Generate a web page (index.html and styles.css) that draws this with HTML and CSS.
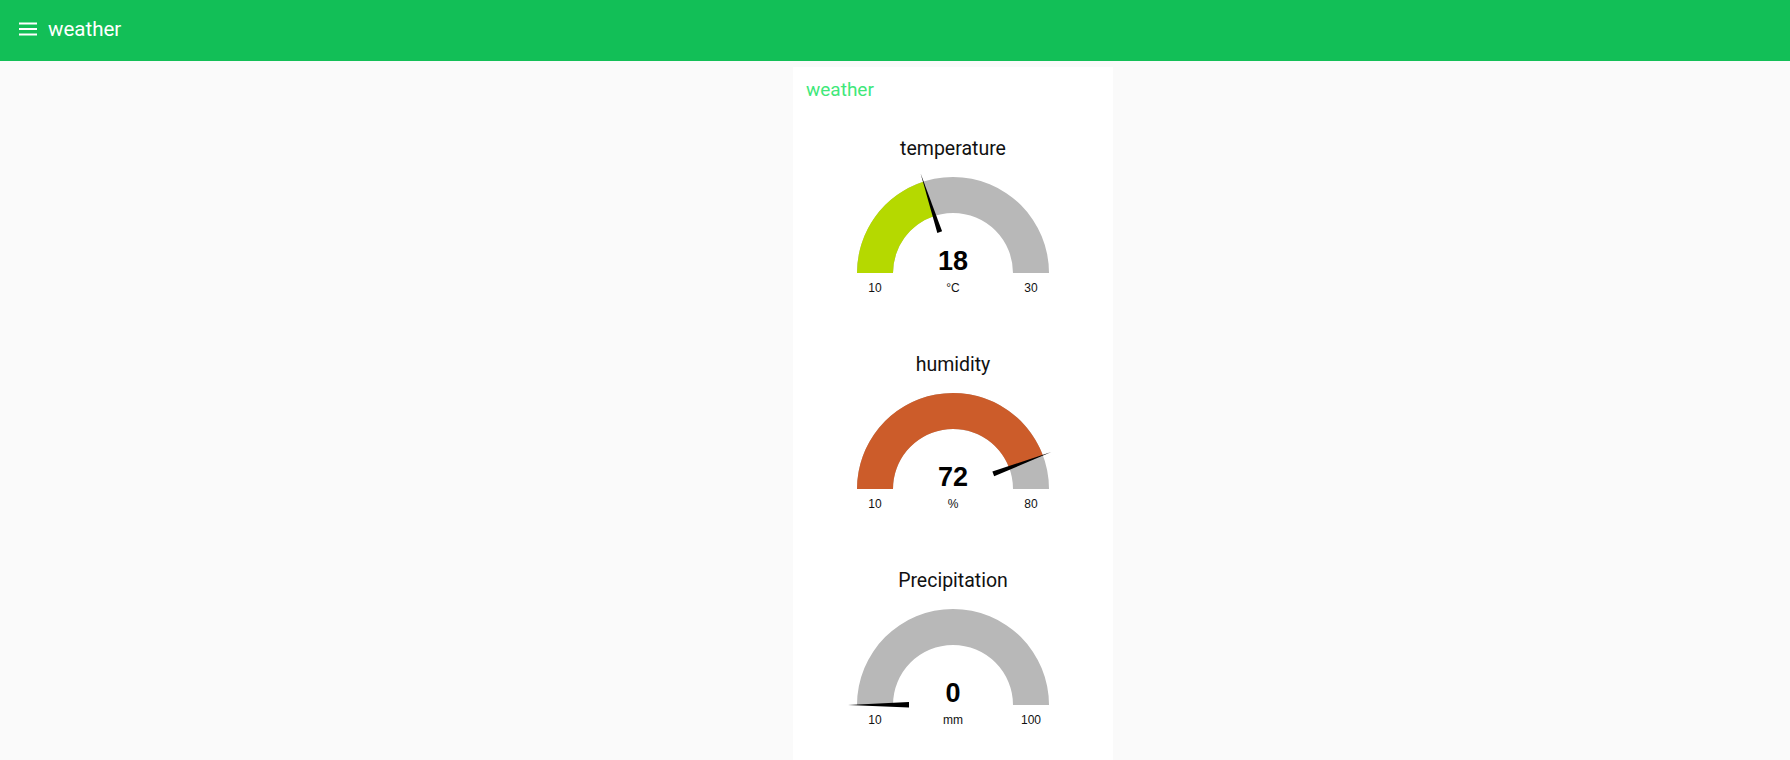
FILE: index.html
```html
<!DOCTYPE html>
<html>
<head>
<meta charset="utf-8">
<title>weather</title>
<link rel="stylesheet" href="styles.css">
</head>
<body>
<header class="toolbar">
  <svg class="menu-icon" width="18" height="14" viewBox="0 0 18 14">
    <rect x="0" y="0.5" width="18" height="2" fill="#fff"/>
    <rect x="0" y="6" width="18" height="2" fill="#fff"/>
    <rect x="0" y="11.5" width="18" height="2" fill="#fff"/>
  </svg>
  <span class="toolbar-title">weather</span>
</header>
<main class="content">
  <section class="card">
    <div class="card-title">weather</div>

    <svg class="gauge" width="320" height="216" viewBox="0 0 320 216">
      <text class="g-title" x="160" y="48">temperature</text>
      <path class="g-bg" d="M 64 166 A 96 96 0 0 1 256 166 L 220 166 A 60 60 0 0 0 100 166 Z"/>
      <path fill="#b5d900" d="M 64 166 A 96 96 0 0 1 130.334 74.698 L 141.459 108.937 A 60 60 0 0 0 100 166 Z"/>
      <polygon class="g-needle" points="149.09,124.33 144.33,125.88 127.55,66.14"/>
      <text class="g-value" x="160" y="163">18</text>
      <text class="g-label" x="82" y="185">10</text>
      <text class="g-label" x="160" y="185">°C</text>
      <text class="g-label" x="238" y="185">30</text>
    </svg>

    <svg class="gauge" width="320" height="216" viewBox="0 0 320 216">
      <text class="g-title" x="160" y="48">humidity</text>
      <path class="g-bg" d="M 64 166 A 96 96 0 0 1 256 166 L 220 166 A 60 60 0 0 0 100 166 Z"/>
      <path fill="#cc5c2a" d="M 64 166 A 96 96 0 0 1 249.88 132.27 L 216.175 144.919 A 60 60 0 0 0 100 166 Z"/>
      <polygon class="g-needle" points="201.14,153.23 199.38,148.55 258.31,129.11"/>
      <text class="g-value" x="160" y="163">72</text>
      <text class="g-label" x="82" y="185">10</text>
      <text class="g-label" x="160" y="185">%</text>
      <text class="g-label" x="238" y="185">80</text>
    </svg>

    <svg class="gauge" width="320" height="216" viewBox="0 0 320 216">
      <text class="g-title" x="160" y="48">Precipitation</text>
      <path class="g-bg" d="M 64 166 A 96 96 0 0 1 256 166 L 220 166 A 60 60 0 0 0 100 166 Z"/>
      <polygon class="g-needle" points="116,163 116,168.5 55,166"/>
      <text class="g-value" x="160" y="163">0</text>
      <text class="g-label" x="82" y="185">10</text>
      <text class="g-label" x="160" y="185">mm</text>
      <text class="g-label" x="238" y="185">100</text>
    </svg>
  </section>
</main>
</body>
</html>
```
FILE: styles.css
```css
html, body {
  margin: 0;
  padding: 0;
}
body {
  background: #fafafa;
  font-family: Roboto, "Noto Sans", sans-serif;
  overflow: hidden;
}
.toolbar {
  height: 61px;
  background: #12bf57;
  display: flex;
  align-items: flex-start;
  padding-left: 19px;
  box-sizing: border-box;
}
.menu-icon {
  margin-top: 22px;
  display: block;
}
.toolbar-title {
  margin-left: 11px;
  margin-top: 17px;
  font-size: 20.5px;
  line-height: 24px;
  color: #ffffff;
}
.content {
  padding: 6px 0 0 793px;
}
.card {
  width: 320px;
  min-height: calc(100vh - 67px);
  background: #ffffff;
  display: flex;
  flex-direction: column;
}
.card-title {
  height: 40px;
  box-sizing: border-box;
  padding: 11px 0 0 13px;
  font-size: 19px;
  line-height: 24px;
  color: #3fe87a;
}
.gauge {
  display: block;
}
.g-title {
  font-family: Roboto, "Noto Sans", sans-serif;
  font-size: 19.5px;
  fill: #111111;
  text-anchor: middle;
}
.g-bg {
  fill: #b8b8b8;
}
.g-needle {
  fill: #000000;
}
.g-value {
  font-family: "Liberation Sans", Arial, sans-serif;
  font-weight: bold;
  font-size: 27px;
  fill: #010101;
  text-anchor: middle;
}
.g-label {
  font-family: "Liberation Sans", Arial, sans-serif;
  font-size: 12px;
  fill: #111111;
  text-anchor: middle;
}
```
